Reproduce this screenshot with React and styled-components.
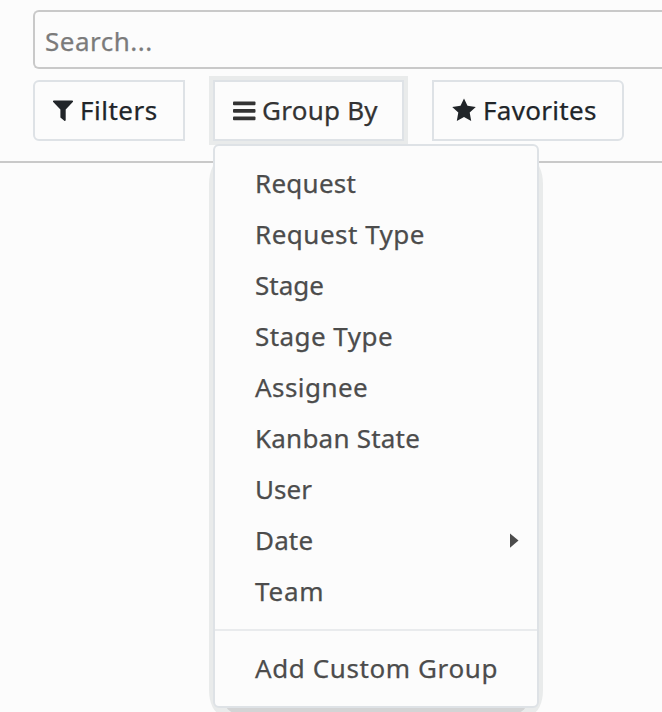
import React from 'react'
import styled, { createGlobalStyle } from 'styled-components'

const GlobalStyle = createGlobalStyle`
  *, *::before, *::after {
    box-sizing: border-box;
  }

  body {
    margin: 0;
    height: 712px;
    overflow: hidden;
    background: #fcfcfc;
    font-family: 'Noto Sans', sans-serif;
    font-size: 26px;
    -webkit-text-stroke: 0.25px currentColor;
  }
`

const ControlPanel = styled.header`
  height: 163px;
  padding: 10px 0 0 33px;
  border-bottom: 2px solid #c9c9c9;
`

const SearchInput = styled.input`
  display: block;
  width: 100%;
  height: 59px;
  padding: 2px 0 0 10px;
  border: 2px solid #c9c9c9;
  border-right: none;
  border-radius: 6px 0 0 6px;
  background: #fcfcfc;
  color: #444;
  font: inherit;
  letter-spacing: 0.5px;
  outline: none;

  &::placeholder {
    color: #7b7b7b;
    opacity: 1;
  }
`

const ButtonRow = styled.div`
  display: flex;
  gap: 28px;
  margin-top: 11px;
`

const DropdownWrapper = styled.div`
  position: relative;
`

const ToggleButton = styled.button`
  display: flex;
  align-items: center;
  gap: ${(props) => props.$gap || 7}px;
  width: ${(props) => props.$width}px;
  height: 61px;
  padding: 0 0 0 18px;
  border: 2px solid #dee2e6;
  border-radius: ${(props) => props.$radius || '0'};
  background: #fcfcfc;
  color: ${(props) => (props.$open ? '#333' : '#212529')};
  box-shadow: ${(props) => (props.$open ? '0 0 0 4px #e9ebeb' : 'none')};
  font: inherit;
  letter-spacing: ${(props) => props.$spacing || 0}px;
  white-space: nowrap;

  & svg {
    flex: none;
    display: block;
  }

  & span {
    padding-bottom: 2px;
  }
`

const Menu = styled.div`
  position: absolute;
  top: 64px;
  left: 0;
  z-index: 1;
  width: 326px;
  height: 564px;

  /* drop shadow in two flat tones */
  &::before {
    content: '';
    position: absolute;
    z-index: -1;
    inset: 16px -4px -6px -4px;
    border-radius: 12px / 24px;
    background: #e9ebeb;
  }

  &::after {
    content: '';
    position: absolute;
    z-index: -1;
    inset: 40px 9px -7px 9px;
    border-radius: 20px;
    background: #d3d4d5;
  }
`

const MenuList = styled.ul`
  height: 100%;
  margin: 0;
  padding: 11px 0;
  list-style: none;
  border: 2px solid #dee2e6;
  border-radius: 6px;
  background: #fcfcfc;
`

const MenuItem = styled.li`
  display: flex;
  align-items: center;
  justify-content: space-between;
  height: 51px;
  padding: 0 18px 0 40px;
  color: #4c4c4c;
  letter-spacing: ${(props) => props.$spacing || 0}px;
  white-space: nowrap;

  & svg {
    margin-top: 2px;
  }
`

const Divider = styled.li`
  height: 2px;
  margin: 13px 0 11px;
  background: #e9ebed;
`

const FilterIcon = () => (
  <svg width="20" height="21" viewBox="0 0 20 21" fill="currentColor">
    <path d="M.8 .5h18.400c.8 0 1.100.9.600 1.500L12.700 9.500v10.600c0 .8-.8 1.100-1.400.7l-3.300-2.700a1.500 1.500 0 0 1-.6-1.200V9.500L.2 2C-.3 1.400 0 .5.800.5z" />
  </svg>
)

const BarsIcon = () => (
  <svg width="23" height="20" viewBox="0 0 23 20" fill="currentColor">
    <rect x="0" y="0.500" width="22.500" height="3.700" rx="0.900" />
    <rect x="0" y="8" width="22.500" height="3.700" rx="0.900" />
    <rect x="0" y="15.500" width="22.500" height="3.700" rx="0.900" />
  </svg>
)

const StarIcon = () => (
  <svg width="24" height="26" viewBox="0 0 24 26" fill="currentColor">
    <path d="M12 .4l3.500 7.400 8.300 1.100-6.100 5.700 1.500 8.300-7.200-4-7.200 4 1.500-8.300L.2 8.900l8.300-1.100z" />
  </svg>
)

const CaretRight = () => (
  <svg width="9" height="15" viewBox="0 0 9 15" fill="currentColor">
    <path d="M0 0.500v14.200l8.500-7.100z" />
  </svg>
)

const groups = [
  { label: 'Request', spacing: 0.25 },
  { label: 'Request Type', spacing: 0.5 },
  { label: 'Stage', spacing: 0 },
  { label: 'Stage Type', spacing: 0.45 },
  { label: 'Assignee', spacing: 0.45 },
  { label: 'Kanban State', spacing: 0.22 },
  { label: 'User', spacing: 0.05 },
  { label: 'Date', spacing: 0.15, submenu: true },
  { label: 'Team', spacing: 0.8 },
]

const GroupByMenu = () => (
  <Menu>
    <MenuList>
      {groups.map(({ label, spacing, submenu }) => (
        <MenuItem key={label} $spacing={spacing}>
          <span>{label}</span>
          {submenu && <CaretRight />}
        </MenuItem>
      ))}
      <Divider />
      <MenuItem $spacing={0.6}>
        <span>Add Custom Group</span>
      </MenuItem>
    </MenuList>
  </Menu>
)

export default function App() {
  return (
    <>
      <GlobalStyle />
      <ControlPanel>
        <SearchInput type="text" placeholder="Search..." />
        <ButtonRow>
          <ToggleButton $width={152} $radius="6px 0 0 6px" $spacing={0.5}>
            <FilterIcon />
            <span>Filters</span>
          </ToggleButton>
          <DropdownWrapper>
            <ToggleButton $width={191} $open $gap={6} $spacing={0.25}>
              <BarsIcon />
              <span>Group By</span>
            </ToggleButton>
            <GroupByMenu />
          </DropdownWrapper>
          <ToggleButton $width={192} $radius="0 6px 6px 0" $spacing={0.3}>
            <StarIcon />
            <span>Favorites</span>
          </ToggleButton>
        </ButtonRow>
      </ControlPanel>
    </>
  )
}
